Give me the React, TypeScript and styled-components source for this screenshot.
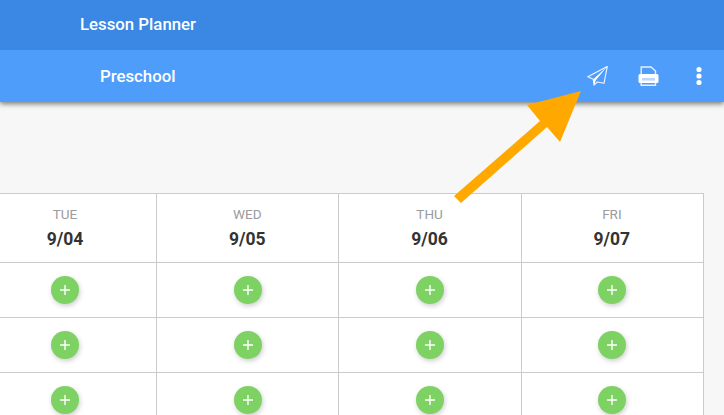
import React from 'react';
import styled, {createGlobalStyle} from 'styled-components';

const days = [
  {name: 'TUE', date: '9/04'},
  {name: 'WED', date: '9/05'},
  {name: 'THU', date: '9/06'},
  {name: 'FRI', date: '9/07'},
];

const rows = [0, 1, 2];

const GlobalStyle = createGlobalStyle`
  html, body {
    margin: 0;
    padding: 0;
    height: 100%;
    overflow: hidden;
    background: #f7f7f7;
    font-family: Roboto, "Liberation Sans", sans-serif;
  }
`;

const Page = styled.div`
  position: relative;
  width: 724px;
  height: 415px;
  overflow: hidden;
  background: #f7f7f7;
`;

const Header = styled.header`
  position: relative;
  z-index: 1;
  box-shadow: 0 2px 5px rgba(0, 0, 0, 0.5);
`;

const TitleBar = styled.div`
  height: 48px;
  padding: 0 0 2px 80px;
  display: flex;
  align-items: center;
  background: #3a87e4;
  color: #fff;
  font-size: 16.8px;
  font-weight: 500;
`;

const SubBar = styled.div`
  height: 52px;
  padding-left: 100px;
  display: flex;
  align-items: center;
  background: #4f9dfb;
  color: #fff;
  font-size: 16.8px;
  font-weight: 500;
`;

const SubTitle = styled.span`
  flex: 1;
`;

const Actions = styled.div`
  display: flex;
  align-items: center;
  color: #fff;
`;

const ActionIcon = styled.svg<{$gap: number}>`
  display: block;
  margin-right: ${props => props.$gap}px;
`;

const Table = styled.div`
  margin: 91px 0 0 -25.2px;
  width: 729.2px;
  display: grid;
  grid-template-columns: repeat(4, 182.3px);
  border-top: 1px solid #cbcbcb;
  background: #fff;
`;

const HeadCell = styled.div`
  height: 69px;
  box-sizing: border-box;
  padding: 13px 1px 0 0;
  display: flex;
  flex-direction: column;
  align-items: center;
  border-right: 1px solid #cbcbcb;
  border-bottom: 1px solid #cbcbcb;
`;

const DayName = styled.span`
  font-size: 13.5px;
  line-height: 15px;
  color: #9b9b9b;
`;

const DayDate = styled.span`
  margin-top: 7px;
  font-size: 17.5px;
  line-height: 21px;
  font-weight: 700;
  color: #333;
`;

const Cell = styled.div`
  height: 55px;
  box-sizing: border-box;
  display: flex;
  align-items: center;
  justify-content: center;
  border-right: 1px solid #cbcbcb;
  border-bottom: 1px solid #cbcbcb;
`;

const AddButton = styled.button`
  width: 28px;
  height: 28px;
  padding: 0;
  border: 0;
  border-radius: 50%;
  display: flex;
  align-items: center;
  justify-content: center;
  background: #7dd263;
  box-shadow: 1px 2px 5px rgba(0, 0, 0, 0.2);
`;

const Arrow = styled.svg`
  position: absolute;
  left: 0;
  top: 0;
  z-index: 2;
  pointer-events: none;
`;

const PlaneIcon = () => (
  <ActionIcon $gap={29} width="22" height="20" viewBox="0 0 22 20">
    <path
      d="M20.3 0.4 L0.8 10.7 L6.3 13.3 L7 19.2 L10.3 16 L17 17.3 Z"
      fill="none"
      stroke="#fff"
      strokeWidth="1.1"
      strokeLinejoin="round"
      opacity="0.9"
    />
    <path d="M20 0.8 L6.3 13.3 L7 19.2 L8.8 14.2 Z" fill="#fff" />
  </ActionIcon>
);

const PrinterIcon = () => (
  <ActionIcon $gap={37} width="21" height="20" viewBox="0 0 21 20">
    <path
      d="M3.2 8 V1 H13 L17.5 5 V8"
      fill="none"
      stroke="#fff"
      strokeWidth="1.4"
      opacity="0.85"
    />
    <path d="M2 8 H19 Q20.5 8 20.5 9.5 V15.5 Q20.5 17 19 17 H2 Q0.5 17 0.5 15.5 V9.5 Q0.5 8 2 8 Z" fill="#fff" />
    <rect x="4" y="12" width="13" height="2.6" fill="#b9d8fd" />
    <path
      d="M3.2 17 V19.2 H17.5 V17"
      fill="none"
      stroke="#fff"
      strokeWidth="1.4"
      opacity="0.85"
    />
  </ActionIcon>
);

const MoreIcon = () => (
  <ActionIcon $gap={22} width="6" height="20" viewBox="0 0 6 20">
    <circle cx="3" cy="3.5" r="2.6" fill="#fff" />
    <circle cx="3" cy="10" r="2.6" fill="#fff" />
    <circle cx="3" cy="16.5" r="2.6" fill="#fff" />
  </ActionIcon>
);

const PlusIcon = () => (
  <svg width="10" height="10" viewBox="0 0 10 10">
    <path d="M5 0 V10 M0 5 H10" stroke="#fff" strokeWidth="1.4" />
  </svg>
);

export default function App() {
  return (
    <Page>
      <GlobalStyle />
      <Header>
        <TitleBar>Lesson Planner</TitleBar>
        <SubBar>
          <SubTitle>Preschool</SubTitle>
          <Actions>
            <PlaneIcon />
            <PrinterIcon />
            <MoreIcon />
          </Actions>
        </SubBar>
      </Header>
      <Table>
        {days.map(day => (
          <HeadCell key={day.name}>
            <DayName>{day.name}</DayName>
            <DayDate>{day.date}</DayDate>
          </HeadCell>
        ))}
        {rows.map(row =>
          days.map(day => (
            <Cell key={`${row}-${day.name}`}>
              <AddButton>
                <PlusIcon />
              </AddButton>
            </Cell>
          )),
        )}
      </Table>
      <Arrow width="724" height="415" viewBox="0 0 724 415">
        <polygon
          points="581,91 527,105 540,121 454,196 461,203 547,127 560,142"
          fill="#ffa900"
        />
      </Arrow>
    </Page>
  );
}
